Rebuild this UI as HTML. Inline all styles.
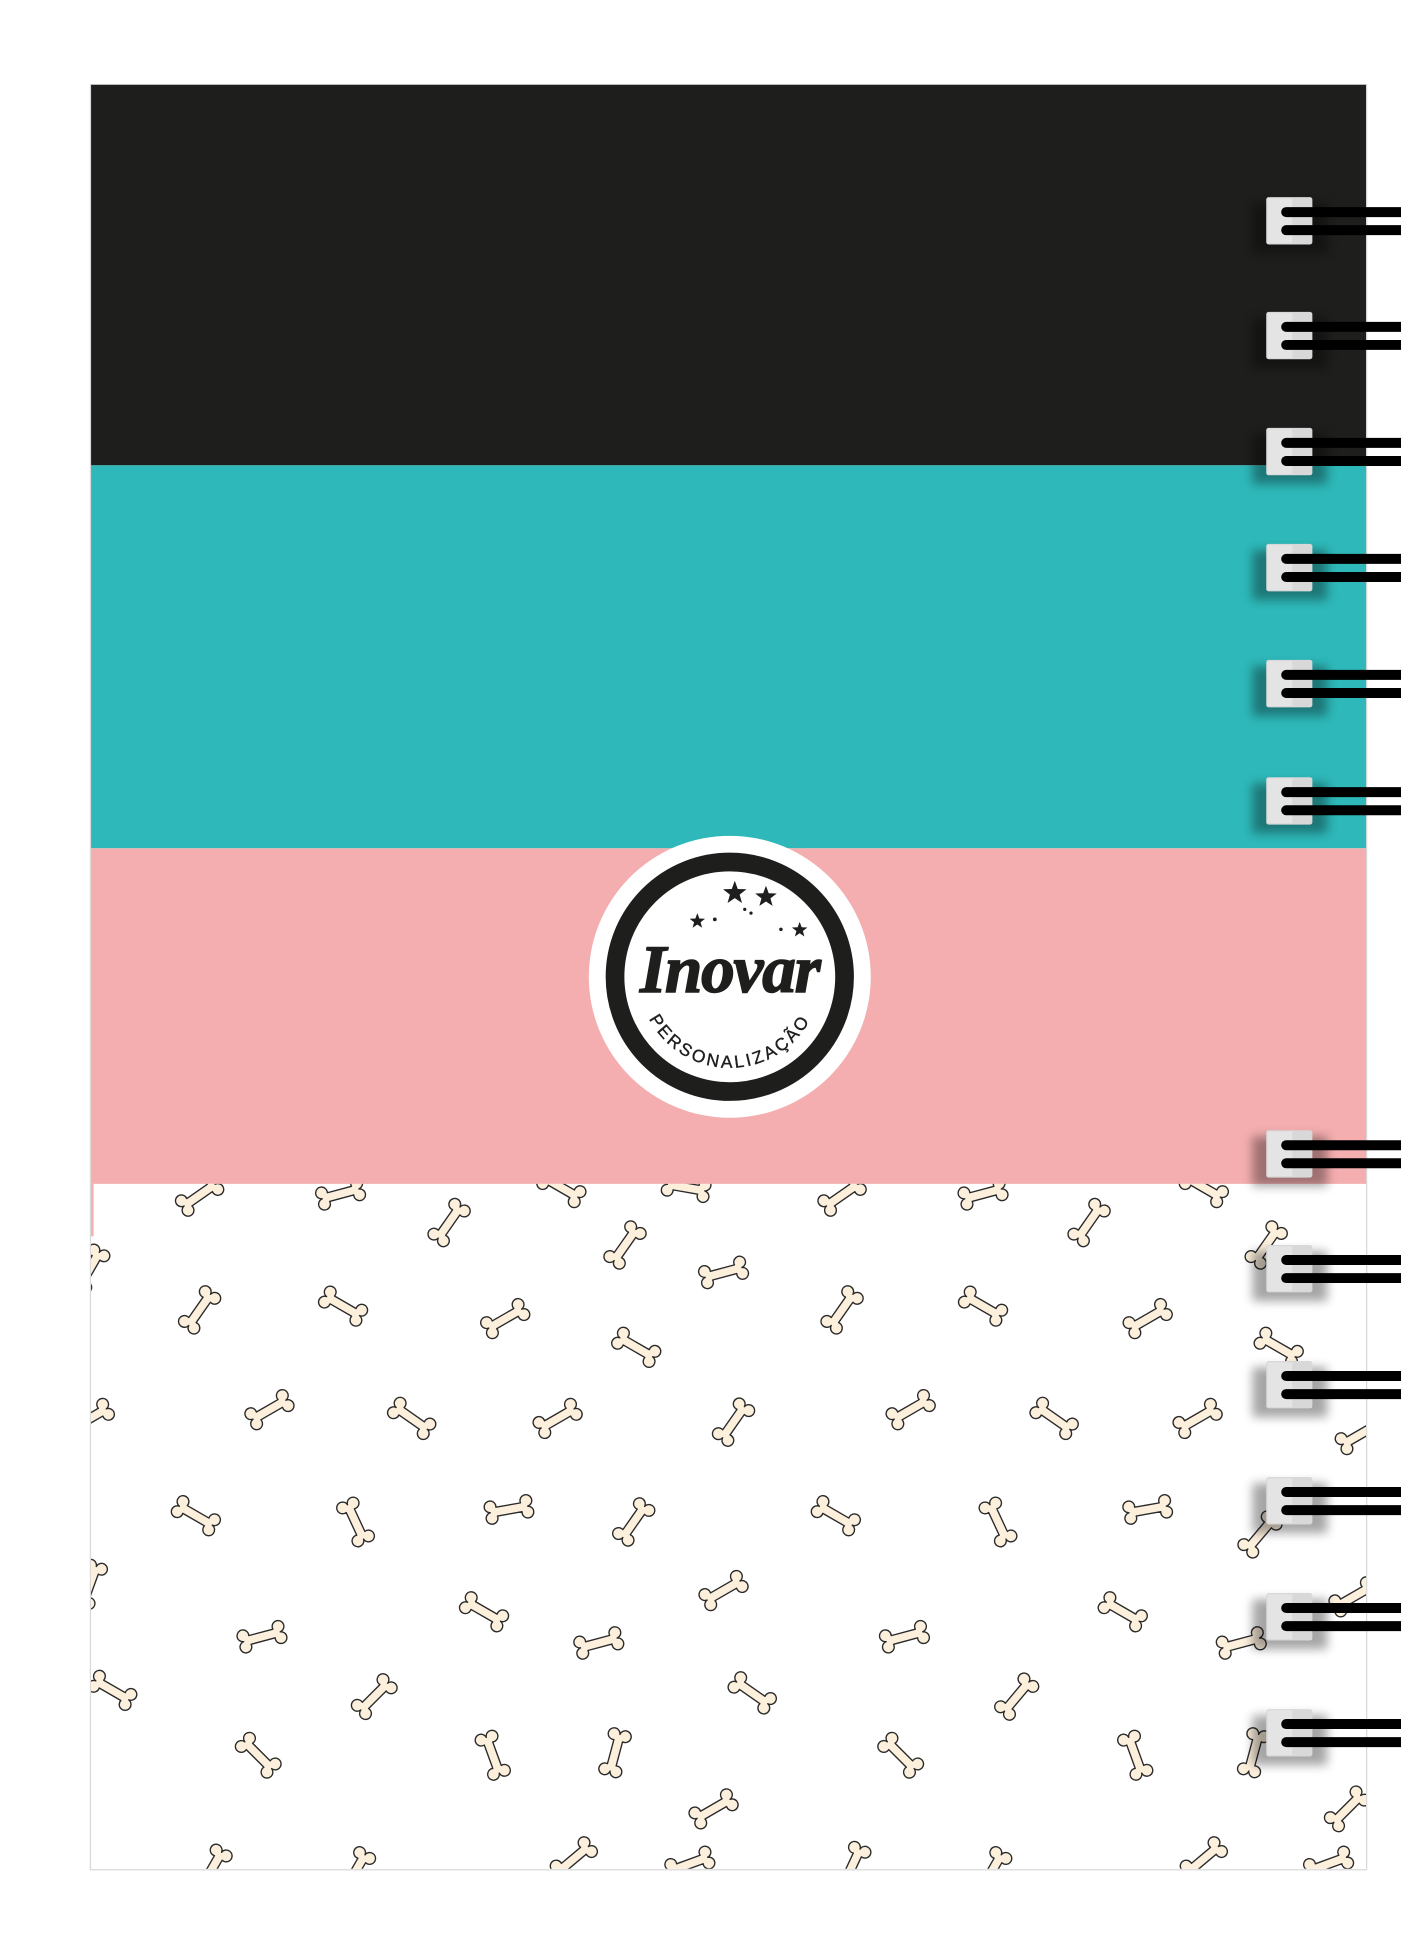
<!DOCTYPE html>
<html><head><meta charset="utf-8"><style>
html,body{margin:0;padding:0;background:#fff;width:1401px;height:1957px;overflow:hidden}
svg{display:block}
</style></head><body>
<svg width="1401" height="1957" viewBox="0 0 1401 1957" xmlns="http://www.w3.org/2000/svg">
<defs>
<clipPath id="wc"><rect x="73" y="949" width="1022" height="549"/></clipPath>
<path id="b" d="M -10 -3.6 L 10 -3.6 A 4.7 4.7 0 1 1 15.2 0 A 4.7 4.7 0 1 1 10 3.6 L -10 3.6 A 4.7 4.7 0 1 1 -15.2 0 A 4.7 4.7 0 1 1 -10 -3.6 Z" fill="#fcefdc" stroke="#2a2a2a" stroke-width="1.1" stroke-linejoin="round"/>
<filter id="sh" x="-50%" y="-80%" width="200%" height="260%"><feGaussianBlur stdDeviation="4"/></filter>
<g id="ring">
<rect x="1004" y="-14" width="60" height="40" fill="#000" opacity="0.35" filter="url(#sh)"/>
<rect x="1015" y="-19" width="37" height="38" rx="2" fill="#d8d8d8"/>
<rect x="1016" y="-18" width="20" height="36" fill="#e4e4e4"/>
<rect x="1027" y="-11" width="100" height="8" rx="4" fill="#000"/>
<rect x="1027" y="3.5" width="100" height="8" rx="4" fill="#000"/>
</g>
</defs>
<g transform="scale(1.2475)">
<rect x="72.5" y="67.8" width="1023" height="1431" fill="#fff" stroke="#d9d9d9" stroke-width="1"/>
<rect x="73" y="68" width="1022" height="305" fill="#1e1e1d"/>
<rect x="73" y="373" width="1022" height="307" fill="#2eb8b9"/>
<rect x="73" y="680" width="1022" height="269" fill="#f4aeaf"/>
<rect x="73" y="949" width="2" height="42" fill="#f4aeaf"/>
<g clip-path="url(#wc)">
<g>
<use href="#b" transform="translate(160,958) rotate(-35)"/>
<use href="#b" transform="translate(273,957) rotate(-15)"/>
<use href="#b" transform="translate(360,980) rotate(-55)"/>
<use href="#b" transform="translate(450,952) rotate(30)"/>
<use href="#b" transform="translate(550,952) rotate(10)"/>
<use href="#b" transform="translate(675,958) rotate(-35)"/>
<use href="#b" transform="translate(788,957) rotate(-15)"/>
<use href="#b" transform="translate(873,980) rotate(-55)"/>
<use href="#b" transform="translate(965,952) rotate(30)"/>
<use href="#b" transform="translate(501,998) rotate(-55)"/>
<use href="#b" transform="translate(580,1020) rotate(-15)"/>
<use href="#b" transform="translate(1015,998) rotate(-55)"/>
<use href="#b" transform="translate(160,1050) rotate(-55)"/>
<use href="#b" transform="translate(275,1047) rotate(30)"/>
<use href="#b" transform="translate(405,1057) rotate(-30)"/>
<use href="#b" transform="translate(510,1080) rotate(30)"/>
<use href="#b" transform="translate(675,1050) rotate(-55)"/>
<use href="#b" transform="translate(788,1047) rotate(30)"/>
<use href="#b" transform="translate(920,1057) rotate(-30)"/>
<use href="#b" transform="translate(1025,1080) rotate(30)"/>
<use href="#b" transform="translate(72,1017) rotate(-60)"/>
<use href="#b" transform="translate(72,1137) rotate(-30)"/>
<use href="#b" transform="translate(216,1130) rotate(-30)"/>
<use href="#b" transform="translate(330,1137) rotate(35)"/>
<use href="#b" transform="translate(447,1137) rotate(-30)"/>
<use href="#b" transform="translate(588,1140) rotate(-55)"/>
<use href="#b" transform="translate(730,1130) rotate(-30)"/>
<use href="#b" transform="translate(845,1137) rotate(35)"/>
<use href="#b" transform="translate(960,1137) rotate(-30)"/>
<use href="#b" transform="translate(157,1215) rotate(30)"/>
<use href="#b" transform="translate(285,1220) rotate(65)"/>
<use href="#b" transform="translate(408,1210) rotate(-10)"/>
<use href="#b" transform="translate(508,1220) rotate(-55)"/>
<use href="#b" transform="translate(670,1215) rotate(30)"/>
<use href="#b" transform="translate(800,1220) rotate(65)"/>
<use href="#b" transform="translate(920,1210) rotate(-10)"/>
<use href="#b" transform="translate(1090,1150) rotate(-30)"/>
<use href="#b" transform="translate(72,1270) rotate(-70)"/>
<use href="#b" transform="translate(580,1275) rotate(-30)"/>
<use href="#b" transform="translate(1085,1280) rotate(-30)"/>
<use href="#b" transform="translate(210,1312) rotate(-15)"/>
<use href="#b" transform="translate(388,1292) rotate(30)"/>
<use href="#b" transform="translate(480,1317) rotate(-15)"/>
<use href="#b" transform="translate(725,1312) rotate(-15)"/>
<use href="#b" transform="translate(900,1292) rotate(30)"/>
<use href="#b" transform="translate(995,1317) rotate(-15)"/>
<use href="#b" transform="translate(90,1355) rotate(30)"/>
<use href="#b" transform="translate(300,1360) rotate(-45)"/>
<use href="#b" transform="translate(603,1357) rotate(35)"/>
<use href="#b" transform="translate(815,1360) rotate(-50)"/>
<use href="#b" transform="translate(1010,1230) rotate(-50)"/>
<use href="#b" transform="translate(207,1407) rotate(45)"/>
<use href="#b" transform="translate(395,1407) rotate(70)"/>
<use href="#b" transform="translate(493,1405) rotate(-75)"/>
<use href="#b" transform="translate(722,1407) rotate(45)"/>
<use href="#b" transform="translate(910,1407) rotate(70)"/>
<use href="#b" transform="translate(1005,1405) rotate(-75)"/>
<use href="#b" transform="translate(572,1450) rotate(-30)"/>
<use href="#b" transform="translate(1080,1450) rotate(-45)"/>
<use href="#b" transform="translate(460,1490) rotate(-40)"/>
<use href="#b" transform="translate(170,1498) rotate(-60)"/>
<use href="#b" transform="translate(553,1494) rotate(-20)"/>
<use href="#b" transform="translate(683,1496) rotate(-65)"/>
<use href="#b" transform="translate(965,1490) rotate(-40)"/>
<use href="#b" transform="translate(1065,1494) rotate(-20)"/>
<use href="#b" transform="translate(285,1500) rotate(-60)"/>
<use href="#b" transform="translate(795,1500) rotate(-60)"/>
</g>
</g>
<!-- logo -->
<circle cx="585" cy="783" r="113" fill="#fff"/>
<circle cx="585" cy="783" r="92" fill="none" stroke="#1e1e1d" stroke-width="15"/>
<text x="585" y="795" text-anchor="middle" font-family="Liberation Serif, serif" font-style="italic" font-weight="bold" font-size="54" fill="#1e1e1d" stroke="#1e1e1d" stroke-width="1.2" letter-spacing="-1">Inovar</text>
<path id="arc" d="M 512 783 A 73 73 0 0 0 658 783" fill="none"/>
<text font-family="Liberation Sans, sans-serif" font-size="14" fill="#1e1e1d" stroke="#1e1e1d" stroke-width="0.3" letter-spacing="2.2"><textPath href="#arc" startOffset="50%" text-anchor="middle">PERSONALIZAÇÃO</textPath></text>
<g fill="#1e1e1d">
<polygon points="589,706 591.4,712.6 598.4,712.8 592.9,717.1 594.8,723.8 589,719.9 583.2,723.8 585.1,717.1 579.6,712.8 586.6,712.6"/>
<polygon points="614,710 616.2,716 622.6,716.2 617.6,720.1 619.3,726.2 614,722.6 608.7,726.2 610.4,720.1 605.4,716.2 611.8,716"/>
<polygon points="559,732 560.6,736.3 565.2,736.5 561.6,739.3 562.8,743.7 559,741.1 555.2,743.7 556.4,739.3 552.8,736.5 557.4,736.3"/>
<polygon points="641,739 642.6,743.3 647.2,743.5 643.6,746.3 644.8,750.7 641,748.1 637.2,750.7 638.4,746.3 634.8,743.5 639.4,743.3"/>
<circle cx="573" cy="737" r="1.5"/><circle cx="597" cy="729" r="1.3"/><circle cx="602" cy="732" r="1.3"/><circle cx="626" cy="745" r="1.4"/>
</g>
<!-- rings -->
<use href="#ring" transform="translate(0,177)"/>
<use href="#ring" transform="translate(0,269)"/>
<use href="#ring" transform="translate(0,362)"/>
<use href="#ring" transform="translate(0,455)"/>
<use href="#ring" transform="translate(0,548)"/>
<use href="#ring" transform="translate(0,642)"/>
<use href="#ring" transform="translate(0,925)"/>
<use href="#ring" transform="translate(0,1017)"/>
<use href="#ring" transform="translate(0,1110)"/>
<use href="#ring" transform="translate(0,1203)"/>
<use href="#ring" transform="translate(0,1296)"/>
<use href="#ring" transform="translate(0,1389)"/>
</g>
</svg>
</body></html>
